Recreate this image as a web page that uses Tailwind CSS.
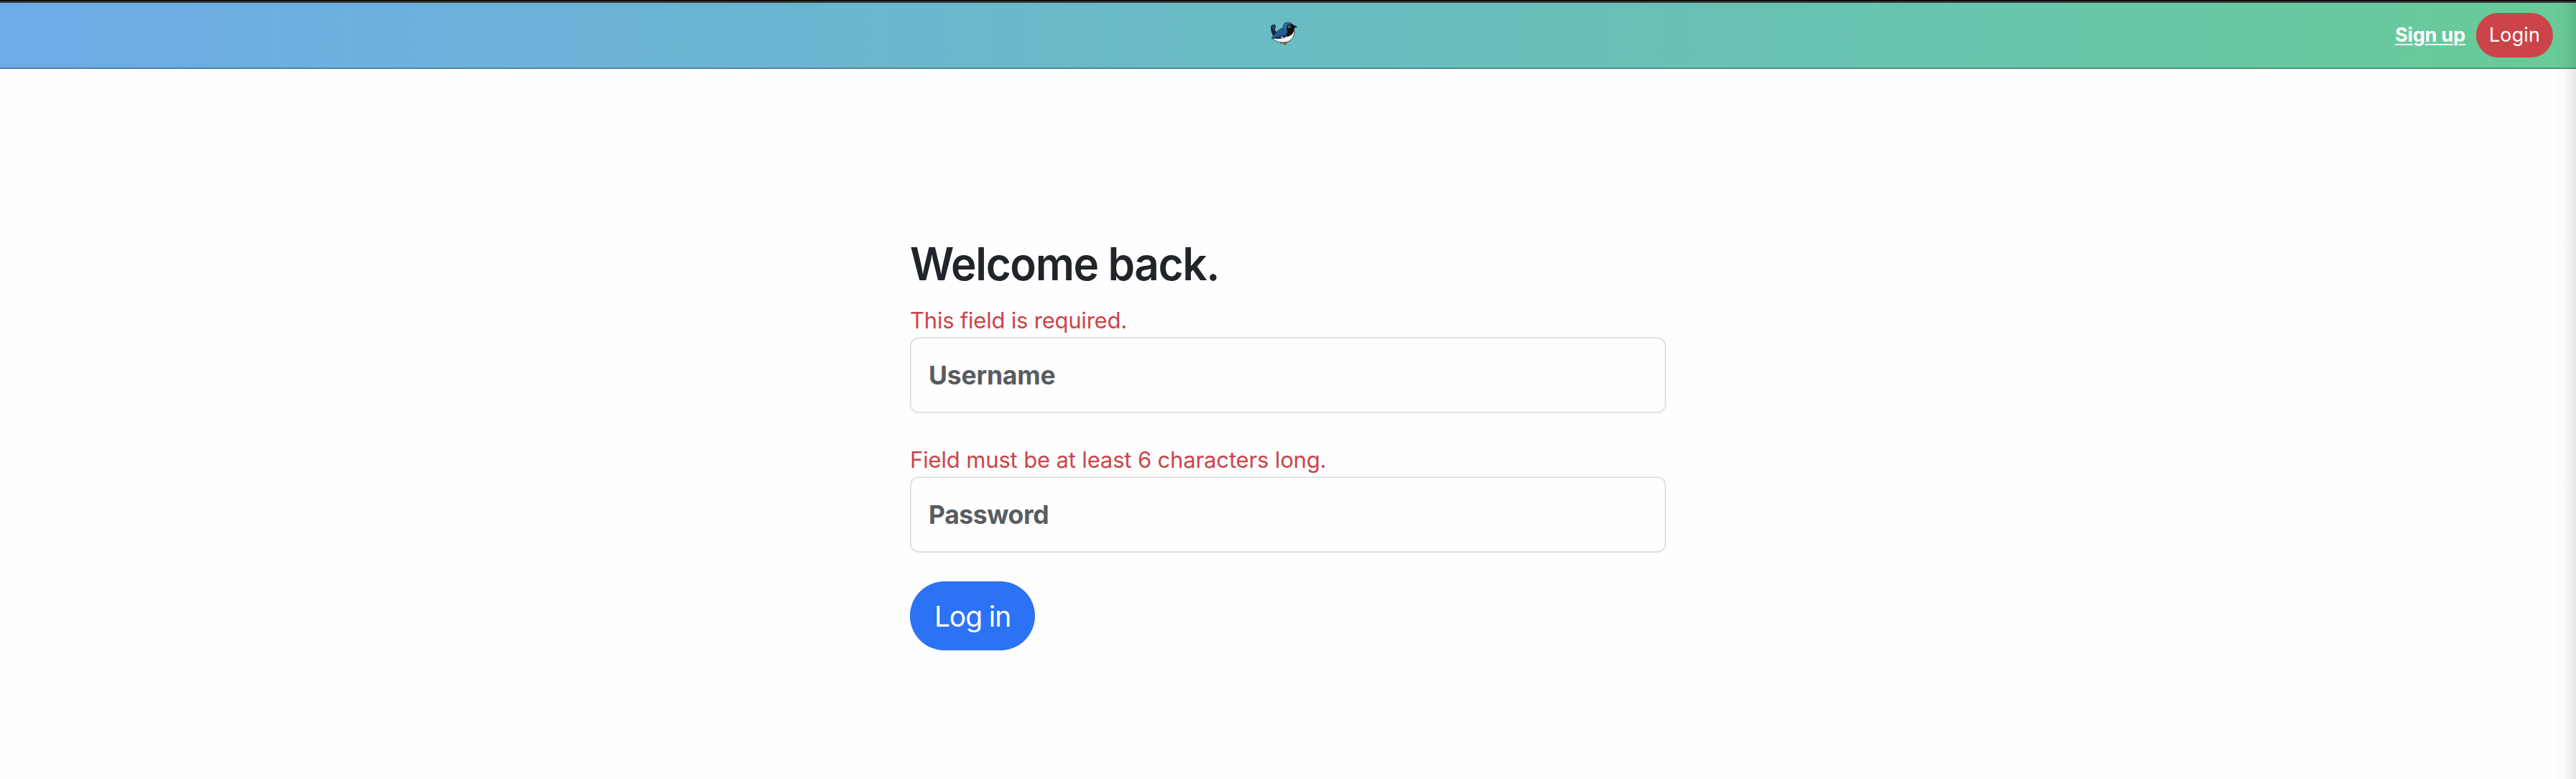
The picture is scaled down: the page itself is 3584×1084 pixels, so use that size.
<!DOCTYPE html>
<html lang="en">
<head>
<meta charset="utf-8">
<title>Log in</title>
<script src="https://cdn.jsdelivr.net/npm/@tailwindcss/browser@4"></script>
</head>
<body class="relative h-[1084px] overflow-hidden bg-[#fefefe] font-['Inter',sans-serif] text-[#212529]">
<div class="h-[2px] bg-[#111111]"></div>
<div class="h-[2px] bg-[#3e3f3f]"></div>
<nav class="grid h-[92px] grid-cols-[1fr_46px_1fr] items-center border-b-2 border-black/25 bg-linear-to-r from-[#6dabe8] to-[#68cb97] bg-origin-border pr-8">
  <span></span>
  <a href="#" class="relative left-[11px] -top-[3px] block h-10 w-[46px]" aria-label="Home">
    <svg viewBox="0 0 46 40" class="h-10 w-[46px]">
      <path d="M17 33.500h10M23 33v3.500M25.500 34l-1.500 2" stroke="#8a6238" stroke-width="2" fill="none"/>
      <path d="M9 27C6 22 3.500 17 4 12c0-3 3-4.500 6-3.500l1.500 3.500-1.500 1c-.5 3 .5 5 3.500 6.500z" fill="#14253c"/>
      <path d="M5 11l5-2 1 3-2 2v5z" fill="#20456f"/>
      <path d="M5 27l7-5 22-6 3 1c.5 8-5 15.500-14 16C16 33.500 10 31 7 28z" fill="#f2f4f2" stroke="#29323b" stroke-width=".8"/>
      <path d="M5.500 27c2-3 5-7 8-9.500 3-3 6-3.500 8-6C21 7 25 4.500 30 5.500c5 1 6 6 5 10-2 7-8 9-13 11-5 1.500-10 1.500-16.500.5z" fill="#285b90" stroke="#162b46" stroke-width=".8"/>
      <path d="M22 11c1-5 6-6.500 11-4-3 .5-5 1-6 3l-2 6c-2-1-3-3-3-5z" fill="#346ba2"/>
      <path d="M36 9c2 0 4 2 5 2.800-1 .8-3 1-5 1.200z" fill="#23262a"/>
      <path d="M27 9c3-2 7-2 9 0l1 4c-.5 7-4 10-9 12l-3-2c3-3 2-6 1-9z" fill="#101216"/>
      <circle cx="30" cy="11" r="1.900" fill="#879299"/><circle cx="30.300" cy="11" r="1.100" fill="#08090b"/>
      <path d="M8 26.500l12-3 5-.5c-2 3-6 4.500-11 4.500z" fill="#172a44"/>
      <path d="M19 24.500l3 2-4 .5z" fill="#dfe6ea"/>
    </svg>
  </a>
  <div class="flex items-center justify-end gap-[15px] text-[27px] text-white">
    <a href="#" class="font-bold tracking-[-0.2px] underline decoration-2 underline-offset-[3px]">Sign up</a>
    <a href="#" class="flex h-[62px] w-[107px] items-center justify-center rounded-full bg-[#cb444a] tracking-[0.1px]">Login</a>
  </div>
</nav>
<main class="mx-auto w-[1052px] pt-[233px]">
  <h1 class="mb-4 origin-left scale-x-[0.955] text-[63px] leading-[76px] font-semibold tracking-[-1.4px]">Welcome back.</h1>
  <form>
    <p class="h-12 text-[31px] leading-[50px] tracking-[-0.22px] text-[#cb444a]">This field is required.</p>
    <input type="text" placeholder="Username" class="mb-10 block h-[106px] w-full rounded-xl border-2 border-[#dee2e6] px-6 text-[35.5px] font-bold tracking-[-0.2px] placeholder:text-[#595c5f]">
    <p class="h-12 text-[31px] leading-[50px] tracking-[-0.15px] text-[#cb444a]">Field must be at least 6 characters long.</p>
    <input type="password" placeholder="Password" class="mb-10 block h-[106px] w-full rounded-xl border-2 border-[#dee2e6] px-6 text-[35.5px] font-bold tracking-[-0.4px] placeholder:text-[#595c5f]">
    <button type="button" class="flex h-24 w-[174px] items-center justify-center rounded-full bg-[#2c72f5] pt-[2px] text-[39px] tracking-[-1.100px] text-white">Log in</button>
  </form>
</main>
<div class="absolute top-1 right-0 bottom-0 w-8 bg-linear-to-r from-transparent via-black/2 to-black/10"></div>
</body>
</html>
